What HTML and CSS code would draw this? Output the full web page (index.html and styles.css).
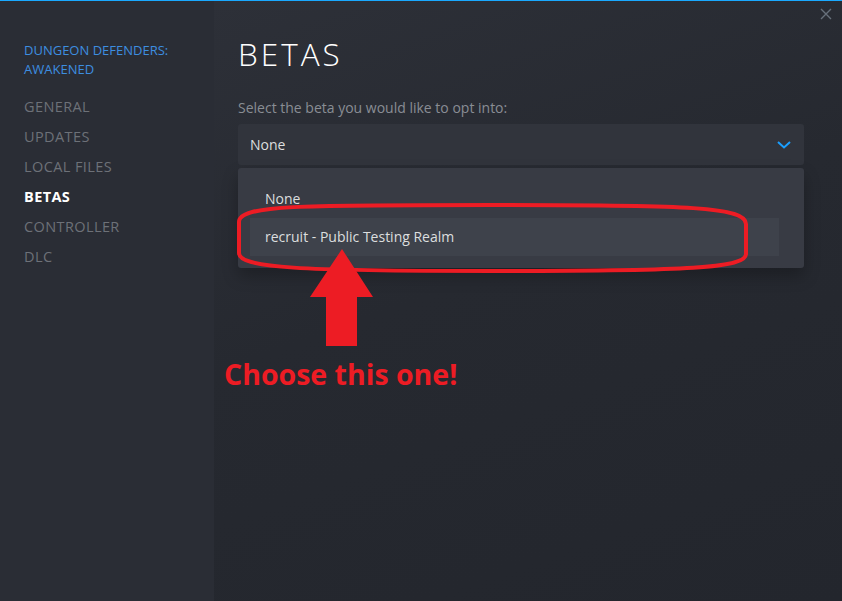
FILE: index.html
```html
<!DOCTYPE html>
<html lang="en">
<head>
<meta charset="utf-8">
<title>Betas</title>
<link rel="stylesheet" href="styles.css">
</head>
<body>
<div class="window">
  <div class="topline"></div>
  <div class="layout">
    <aside class="sidebar">
      <div class="game-title">DUNGEON DEFENDERS:<br>AWAKENED</div>
      <nav class="nav">
        <div class="nav-item">GENERAL</div>
        <div class="nav-item">UPDATES</div>
        <div class="nav-item">LOCAL FILES</div>
        <div class="nav-item active">BETAS</div>
        <div class="nav-item">CONTROLLER</div>
        <div class="nav-item">DLC</div>
      </nav>
    </aside>
    <main class="content">
      <h1 class="heading">BETAS</h1>
      <div class="label">Select the beta you would like to opt into:</div>
      <div class="select">
        <span class="select-value">None</span>
        <svg class="chevron" width="14" height="8" viewBox="0 0 14 8"><path d="M1 1 L7 6.5 L13 1" fill="none" stroke="#1a9fff" stroke-width="2"/></svg>
      </div>
      <div class="options">
        <div class="option">None</div>
        <div class="option hover">recruit - Public Testing Realm</div>
      </div>
    </main>
  </div>
  <svg class="close" width="12" height="12" viewBox="0 0 12 12"><path d="M1 1 L11 11 M11 1 L1 11" stroke="#67707b" stroke-width="1.4" fill="none"/></svg>

  <svg class="annot" width="842" height="601" viewBox="0 0 842 601">
    <path d="M239 222 C239 205, 300 205, 492 205 C690 205, 746 207, 746 224 L746 254 C746 268, 690 271, 492 271 C300 271, 239 268, 239 253 Z" fill="none" stroke="#ed1c24" stroke-width="4"/>
    <polygon points="342,249 373,297 357,297 357,346 326,346 326,297 310,297" fill="#ed1c24"/>
  </svg>
  <div class="callout">Choose this one!</div>
</div>
</body>
</html>
```

FILE: styles.css
```css
* { box-sizing: border-box; }
html, body { margin: 0; padding: 0; }
body {
  width: 842px;
  height: 601px;
  overflow: hidden;
  background: #24272f;
  font-family: "Open Sans", "Noto Sans", sans-serif;
}
.window {
  position: relative;
  width: 842px;
  height: 601px;
  display: flex;
  flex-direction: column;
}
.topline {
  height: 1px;
  background: #1aa9ff;
  flex: none;
}
.layout {
  flex: 1;
  display: flex;
}
.sidebar {
  width: 214px;
  flex: none;
  background: #2a2d35;
  padding: 40px 0 0 24px;
}
.game-title {
  color: #3d8ee0;
  font-size: 13px;
  line-height: 19px;
}
.nav {
  margin-top: 13px;
  display: flex;
  flex-direction: column;
}
.nav-item {
  color: #6d7178;
  font-size: 14.5px;
  line-height: 30px;
  letter-spacing: 0.4px;
}
.nav-item.active {
  color: #ffffff;
  font-weight: 700;
}
.content {
  flex: 1;
  padding: 34px 38px 0 24px;
  background: linear-gradient(160deg, #2d3038 0%, #262930 45%, #23262d 100%);
}
.heading {
  margin: 0;
  color: #ffffff;
  font-weight: 300;
  font-size: 31.5px;
  line-height: 36px;
  letter-spacing: 3px;
  padding-top: 1px;
}
.label {
  margin-top: 26px;
  color: #898d94;
  font-size: 14px;
  line-height: 20px;
}
.select {
  margin-top: 6px;
  height: 41px;
  background: #31343c;
  border-radius: 3px;
  display: flex;
  align-items: center;
  justify-content: space-between;
  padding: 0 13px 0 12px;
}
.select-value {
  color: #dcdedf;
  font-size: 14px;
}
.options {
  margin-top: 3px;
  background: #383b44;
  border-radius: 3px;
  padding: 12px 25px 12px 12px;
  box-shadow: 0 8px 16px rgba(0,0,0,0.25);
}
.option {
  height: 38px;
  display: flex;
  align-items: center;
  padding-left: 15px;
  padding-bottom: 2px;
  color: #dcdedf;
  font-size: 14px;
}
.option.hover {
  background: #3e424b;
}
.close {
  position: absolute;
  top: 8px;
  right: 10px;
}
.annot {
  position: absolute;
  left: 0;
  top: 0;
  pointer-events: none;
}
.callout {
  position: absolute;
  left: 224px;
  top: 353px;
  color: #ed1c24;
  font-weight: 700;
  font-size: 28.5px;
  line-height: 42px;
}
```
